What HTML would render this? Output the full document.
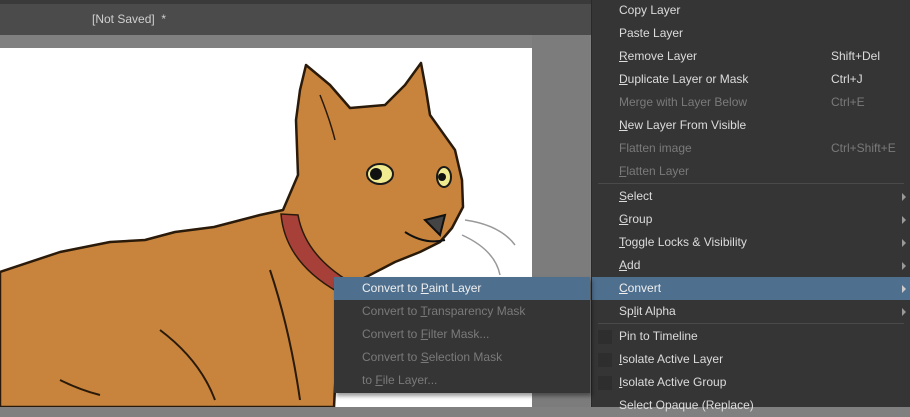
<!DOCTYPE html>
<html><head><style>
*{margin:0;padding:0;box-sizing:border-box}
body{width:910px;height:407px;overflow:hidden;background:#808080;font-family:"Liberation Sans",sans-serif;font-size:12px;position:relative}
.abs{position:absolute}
.it{position:absolute;height:23px;line-height:23px;color:#dcdcdc;white-space:nowrap}
.d{color:#7a7a7a}
.sc{position:absolute;left:212px}
.ar{position:absolute;right:4px;top:8px;width:0;height:0;border-left:4px solid #999;border-top:4px solid transparent;border-bottom:4px solid transparent}
.sep{position:absolute;left:6px;right:6px;height:1px;background:#4a4a4a}
.cb{position:absolute;left:6px;top:5px;width:14px;height:14px;background:#2e2e2e}
</style></head><body>
<div class="abs" style="left:0;top:0;width:910px;height:4px;background:#3a3a3a"></div>
<div class="abs" style="left:0;top:4px;width:600px;height:31px;background:#4b4b4b;color:#cfcfcf;line-height:30px"><span style="position:absolute;left:92px">[Not Saved]&nbsp; *</span></div>
<div class="abs" style="left:0;top:48px;width:533px;height:359px;background:#fff"></div>
<svg class="abs" style="left:0;top:0" width="600" height="407" viewBox="0 0 600 407">
<path d="M0,272 L60,252 L110,242 L145,240 L175,232 L214,227 L260,215 L283,210 L298,175 L296,120 L300,90 L306,65 L330,85 L350,108 L385,105 L405,85 L421,63 L426,90 L430,115 L455,150 L462,180 L463,207 L452,228 L440,242 L420,252 L395,262 L370,275 L340,290 L334,407 L0,407 Z" fill="#c8843c" stroke="#2a1a0a" stroke-width="2.5" stroke-linejoin="round"/>
<path d="M281,214 Q285,262 338,292 L350,282 Q305,255 298,215 Z" fill="#a8403a" stroke="#2a1a0a" stroke-width="1.5"/>
<ellipse cx="380" cy="174" rx="13" ry="10" fill="#f0ea90" stroke="#1a1a1a" stroke-width="2"/>
<circle cx="376" cy="174" r="6" fill="#111"/>
<ellipse cx="444" cy="177" rx="7" ry="10" fill="#f0ea90" stroke="#1a1a1a" stroke-width="2"/>
<circle cx="442" cy="177" r="4" fill="#111"/>
<path d="M425,220 L445,215 L440,235 Z" fill="#444" stroke="#111" stroke-width="2"/>
<path d="M405,232 Q425,245 445,240" fill="none" stroke="#111" stroke-width="2"/>
<path d="M465,220 Q500,225 515,245 M462,235 Q495,250 500,275" fill="none" stroke="#999" stroke-width="1.5"/>
<path d="M270,270 Q290,330 300,400 M160,330 Q200,360 215,400 M60,380 Q80,390 100,395" fill="none" stroke="#2a1a0a" stroke-width="2"/>
<path d="M320,95 Q330,120 335,140" fill="none" stroke="#2a1a0a" stroke-width="1.5"/>
</svg>
<div class="abs" style="left:532px;top:35px;width:58px;height:372px;background:#7c7c7c"></div>
<div class="abs" style="left:591px;top:0;width:319px;height:407px;background:#353535;border-left:1px solid #2a2a2a">
<div class="it" style="left:27px;top:-1px">Copy Layer</div>
<div class="it" style="left:27px;top:22px">Paste Layer</div>
<div class="it" style="left:27px;top:45px;width:290px"><u>R</u>emove Layer<span class="sc">Shift+Del</span></div>
<div class="it" style="left:27px;top:68px;width:290px"><u>D</u>uplicate Layer or Mask<span class="sc">Ctrl+J</span></div>
<div class="it d" style="left:27px;top:91px;width:290px">Merge with Layer Below<span class="sc">Ctrl+E</span></div>
<div class="it" style="left:27px;top:114px"><u>N</u>ew Layer From Visible</div>
<div class="it d" style="left:27px;top:137px;width:290px">Flatten image<span class="sc">Ctrl+Shift+E</span></div>
<div class="it d" style="left:27px;top:160px"><u>F</u>latten Layer</div>
<div class="sep" style="top:183px"></div>
<div class="it" style="left:0;top:185px;width:318px;padding-left:27px"><u>S</u>elect<span class="ar"></span></div>
<div class="it" style="left:0;top:208px;width:318px;padding-left:27px"><u>G</u>roup<span class="ar"></span></div>
<div class="it" style="left:0;top:231px;width:318px;padding-left:27px"><u>T</u>oggle Locks &amp; Visibility<span class="ar"></span></div>
<div class="it" style="left:0;top:254px;width:318px;padding-left:27px"><u>A</u>dd<span class="ar"></span></div>
<div class="it" style="left:0;top:277px;width:318px;padding-left:27px;background:#4e6f8e;color:#f0f0f0"><u>C</u>onvert<span class="ar" style="border-left-color:#ccc"></span></div>
<div class="it" style="left:0;top:300px;width:318px;padding-left:27px">Sp<u>l</u>it Alpha<span class="ar"></span></div>
<div class="sep" style="top:323px"></div>
<div class="it" style="left:0;top:325px;width:318px;padding-left:27px"><span class="cb"></span>Pin to Timeline</div>
<div class="it" style="left:0;top:348px;width:318px;padding-left:27px"><span class="cb"></span><u>I</u>solate Active Layer</div>
<div class="it" style="left:0;top:371px;width:318px;padding-left:27px"><span class="cb"></span><u>I</u>solate Active Group</div>
<div class="it" style="left:0;top:394px;width:318px;padding-left:27px">Select Opaque (Replace)</div>
</div>
<div class="abs" style="left:334px;top:277px;width:256px;height:116px;background:#353535;box-shadow:2px 3px 4px rgba(0,0,0,.4)">
<div class="it" style="left:0;top:0;width:256px;padding-left:28px;background:#4e6f8e;color:#f0f0f0">Convert to <u>P</u>aint Layer</div>
<div class="it d" style="left:28px;top:23px">Convert to <u>T</u>ransparency Mask</div>
<div class="it d" style="left:28px;top:46px">Convert to <u>F</u>ilter Mask...</div>
<div class="it d" style="left:28px;top:69px">Convert to <u>S</u>election Mask</div>
<div class="it d" style="left:28px;top:92px">to <u>F</u>ile Layer...</div>
</div>
</body></html>
